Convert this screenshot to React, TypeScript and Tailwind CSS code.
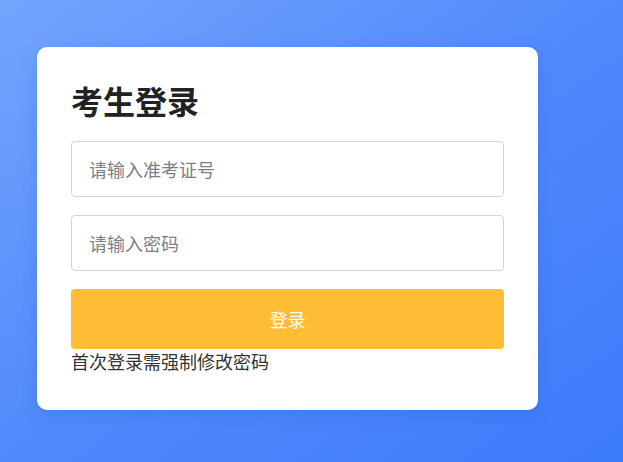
import React from "react";

export default function App() {
  return (
    <div
      className="w-[623px] h-[462px] overflow-hidden bg-gradient-to-br from-[#73a4fd] via-[#5189fb] to-[#3c7bfb] pt-[47px] pl-[37px]"
      style={{ fontFamily: '"Noto Sans CJK SC", "Noto Sans", sans-serif' }}
    >
      <div className="w-[501px] bg-white rounded-[10px] px-[34px] pt-[33px] pb-[37px] shadow-[0_4px_16px_rgba(30,60,150,0.15)]">
        <h1 className="text-[32px] leading-[41px] font-bold text-[#222222]">考生登录</h1>
        <div className="mt-[20px] flex flex-col gap-[18px]">
          <input
            className="w-full h-[56px] border border-[#d2d4d8] rounded-[4px] px-[17px] text-[18px] outline-none placeholder:text-[#7b7f86]"
            placeholder="请输入准考证号"
          />
          <input
            type="password"
            className="w-full h-[56px] border border-[#d2d4d8] rounded-[4px] px-[17px] text-[18px] outline-none placeholder:text-[#7b7f86]"
            placeholder="请输入密码"
          />
          <button className="w-full h-[60px] bg-[#ffbd35] rounded-[4px] text-white text-[18px]">登录</button>
        </div>
        <p className="text-[18px] leading-[24px] text-[#333333]">首次登录需强制修改密码</p>
      </div>
    </div>
  );
}
